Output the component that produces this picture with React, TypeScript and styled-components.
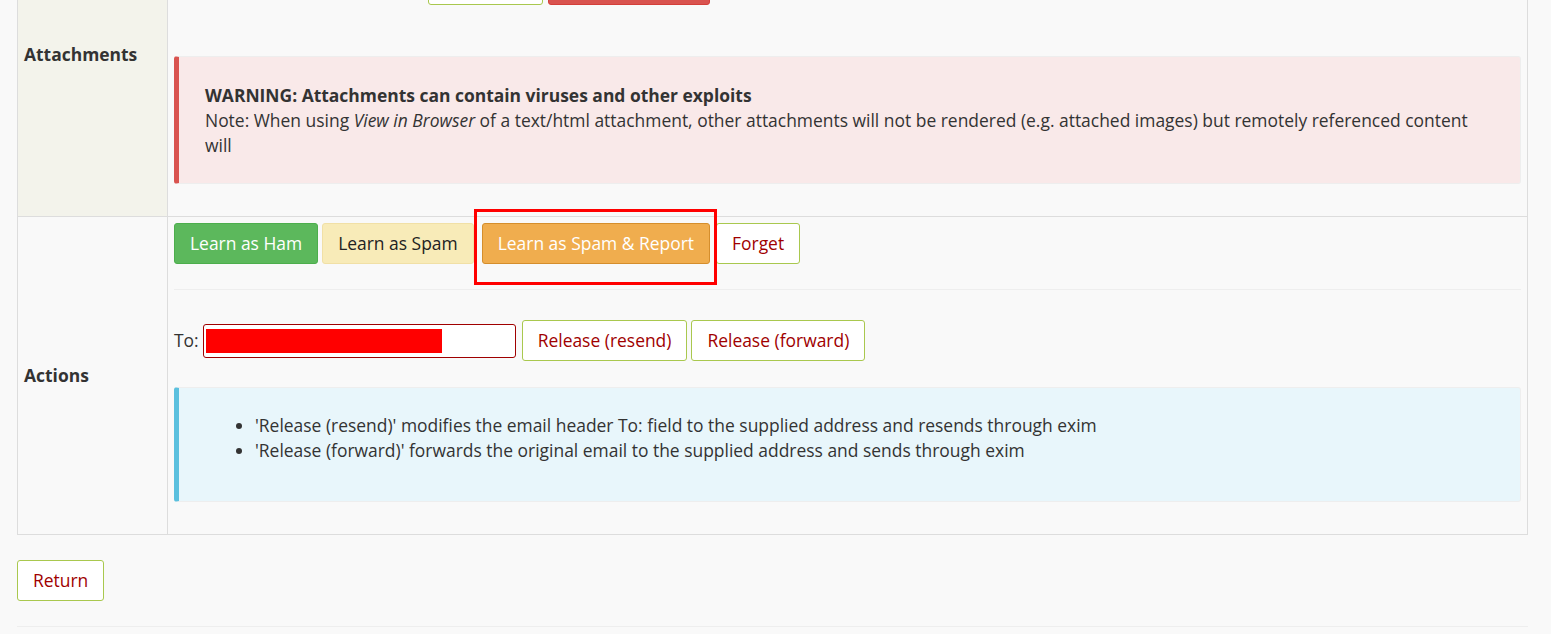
import React from "react";
import styled, { createGlobalStyle, css } from "styled-components";

const GlobalStyle = createGlobalStyle`
  html, body {
    margin: 0;
    padding: 0;
    background: #f9f9f9;
    overflow: hidden;
  }
  body {
    font-family: "Open Sans", "Liberation Sans", sans-serif;
    font-size: 17.45px;
    line-height: 25px;
    color: #333;
  }
`;

const Page = styled.div`
  margin: -108px 23px 0 17px;
`;

const Table = styled.table`
  width: 100%;
  border-collapse: collapse;
  border: 1px solid #ddd;
`;

const Label = styled.th<{ $tint?: boolean }>`
  width: 137px;
  text-align: left;
  vertical-align: middle;
  padding: 6px;
  font-weight: 700;
  border: 1px solid #ddd;
  background: ${(p) => (p.$tint ? "#f3f3eb" : "#f9f9f9")};
`;

const Cell = styled.td`
  padding: 6px;
  border: 1px solid #ddd;
  vertical-align: top;
`;

const Para = styled.p`
  margin: 0 0 40px;
  color: #333;
`;

const Row = styled.div<{ $gap?: number }>`
  display: flex;
  align-items: center;
  gap: ${(p) => p.$gap ?? 4}px;
`;

const FileName = styled.span`
  min-width: 249px;
`;

type Variant = "success" | "warningLight" | "warning" | "default" | "danger";

const variants: Record<Variant, ReturnType<typeof css>> = {
  success: css`
    background: #5cb85c;
    border-color: #4cae4c;
    color: #fff;
  `,
  warningLight: css`
    background: #f8ebb8;
    border-color: #f1e0a6;
    color: #222;
  `,
  warning: css`
    background: #f0ad4e;
    border-color: #d58e2c;
    color: #fff;
  `,
  default: css`
    background: #fff;
    border-color: #a9c84e;
    color: #a00000;
  `,
  danger: css`
    background: #d9534f;
    border-color: #d43f3a;
    color: #fff;
  `,
};

const Button = styled.button<{ $variant: Variant }>`
  font-family: inherit;
  font-size: 17.45px;
  line-height: 25px;
  padding: 7px 15px;
  border: 1px solid;
  border-radius: 3px;
  cursor: pointer;
  white-space: nowrap;
  ${(p) => variants[p.$variant]}
`;

const Highlight = styled.span`
  position: relative;
  display: inline-flex;
  margin: 0 2px 0 4px;
`;

const HighlightBox = styled.span`
  position: absolute;
  left: -8px;
  right: -7px;
  top: -14px;
  bottom: -21px;
  border: 3px solid #ff0000;
  pointer-events: none;
`;

const Alert = styled.div<{ $kind: "danger" | "info" }>`
  border: 1px solid #eee;
  border-left: 5px solid ${(p) => (p.$kind === "danger" ? "#d9534f" : "#5bc0de")};
  border-radius: 3px;
  background: ${(p) => (p.$kind === "danger" ? "#f9e9e9" : "#e8f6fb")};
  padding: ${(p) => (p.$kind === "danger" ? "26px 26px 25px 26px" : "25px 26px 27px 26px")};
  margin: ${(p) => (p.$kind === "danger" ? "51px 0 26px" : "26px 0 26px")};
`;

const Strong = styled.strong`
  font-weight: 700;
`;

const List = styled.ul`
  margin: 0 0 11px;
  padding-left: 50px;
`;

const Rule = styled.hr<{ $margin: string }>`
  border: 0;
  border-top: 1px solid #eee;
  margin: ${(p) => p.$margin};
`;

const ToLabel = styled.span``;

const Input = styled.div`
  width: 309px;
  height: 32px;
  border: 1px solid #a00000;
  border-radius: 3px;
  background: #fff;
  padding: 0 1px;
  box-sizing: content-box;
  display: flex;
  align-items: center;
  margin-right: 2px;
`;

const Redaction = styled.div`
  width: 236px;
  height: 24px;
  background: #ff0000;
  margin-left: 1px;
`;

const Footer = styled.div`
  padding-top: 25px;
`;

export default function App() {
  return (
    <>
      <GlobalStyle />
      <Page>
        <Table>
          <tbody>
            <tr>
              <Label $tint>Attachments</Label>
              <Cell>
                <Para>Attachments in this message</Para>
                <Row $gap={5}>
                  <FileName>message.html</FileName>
                  <Button $variant="default">Download</Button>
                  <Button $variant="danger">View in Browser</Button>
                </Row>
                <Alert $kind="danger">
                  <Strong>WARNING: Attachments can contain viruses and other exploits</Strong>
                  <br />
                  Note: When using <em>View in Browser</em> of a text/html attachment, other
                  attachments will not be rendered (e.g. attached images) but remotely referenced
                  content will
                </Alert>
              </Cell>
            </tr>
            <tr>
              <Label>Actions</Label>
              <Cell>
                <Row>
                  <Button $variant="success">Learn as Ham</Button>
                  <Button $variant="warningLight">Learn as Spam</Button>
                  <Highlight>
                    <Button $variant="warning">Learn as Spam &amp; Report</Button>
                    <HighlightBox />
                  </Highlight>
                  <Button $variant="default">Forget</Button>
                </Row>
                <Rule $margin="25px 0 30px" />
                <Row>
                  <ToLabel>To:</ToLabel>
                  <Input>
                    <Redaction />
                  </Input>
                  <Button $variant="default">Release (resend)</Button>
                  <Button $variant="default">Release (forward)</Button>
                </Row>
                <Alert $kind="info">
                  <List>
                    <li>
                      'Release (resend)' modifies the email header To: field to the supplied
                      address and resends through exim
                    </li>
                    <li>
                      'Release (forward)' forwards the original email to the supplied address and
                      sends through exim
                    </li>
                  </List>
                </Alert>
              </Cell>
            </tr>
          </tbody>
        </Table>
        <Footer>
          <Button $variant="default">Return</Button>
          <Rule $margin="25px 0 0" />
        </Footer>
      </Page>
    </>
  );
}
